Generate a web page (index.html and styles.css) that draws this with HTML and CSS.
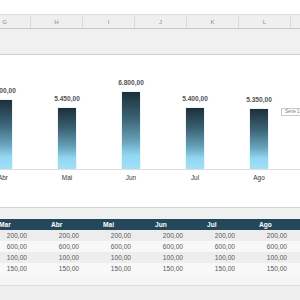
FILE: index.html
```html
<!DOCTYPE html>
<html>
<head>
<meta charset="utf-8">
<link rel="stylesheet" href="styles.css">
</head>
<body>
<div class="topbar"></div>
<div class="colhead">
  <div class="ch">G</div><div class="ch">H</div><div class="ch">I</div><div class="ch">J</div><div class="ch">K</div><div class="ch">L</div><div class="ch"></div>
</div>
<div class="gap1"></div>
<div class="chart">
  <div class="plot">
    <div class="slot"><span class="val">6.100,00</span><div class="bar" style="height:70px"></div></div>
    <div class="slot"><span class="val">5.450,00</span><div class="bar" style="height:62px"></div></div>
    <div class="slot"><span class="val">6.800,00</span><div class="bar" style="height:78px"></div></div>
    <div class="slot"><span class="val">5.400,00</span><div class="bar" style="height:62px"></div></div>
    <div class="slot"><span class="val">5.350,00</span><div class="bar" style="height:61px"></div></div>
  </div>
  <div class="axis"></div>
  <div class="cats">
    <span class="cat">Abr</span><span class="cat">Mai</span><span class="cat">Jun</span><span class="cat">Jul</span><span class="cat">Ago</span>
  </div>
  <div class="legend">Série 1</div>
</div>
<div class="gap2"></div>
<div class="table">
  <div class="row head"><span>Mar</span><span>Abr</span><span>Mai</span><span>Jun</span><span>Jul</span><span>Ago</span></div>
  <div class="row odd"><span>200,00</span><span>200,00</span><span>200,00</span><span>200,00</span><span>200,00</span><span>200,00</span></div>
  <div class="row even"><span>600,00</span><span>600,00</span><span>600,00</span><span>600,00</span><span>600,00</span><span>600,00</span></div>
  <div class="row odd"><span>100,00</span><span>100,00</span><span>100,00</span><span>100,00</span><span>100,00</span><span>100,00</span></div>
  <div class="row even"><span>150,00</span><span>150,00</span><span>150,00</span><span>150,00</span><span>150,00</span><span>150,00</span></div>
</div>
<div class="tail"></div>
</body>
</html>
```
FILE: styles.css
```css
html, body {
  margin: 0;
  padding: 0;
  background: #efefef;
  font-family: "Liberation Sans", Arial, sans-serif;
  overflow: hidden;
  width: 300px;
  height: 300px;
}
.topbar {
  height: 14px;
  background: #ffffff;
  border-bottom: 1px solid #dcdcdc;
}
.colhead {
  height: 13px;
  background: #efefef;
  border-bottom: 1px solid #c9c9c9;
  display: flex;
  margin-left: -21px;
  overflow: hidden;
}
.ch {
  flex: 0 0 52px;
  box-sizing: border-box;
  border-right: 1px solid #dadada;
  font-size: 6px;
  color: #8a8a8a;
  text-align: center;
  line-height: 14px;
}
.gap1 {
  height: 25px;
  background: #f0f0f0;
  border-bottom: 1px solid #cfcfcf;
}
.chart {
  position: relative;
  height: 152px;
  background: #ffffff;
  border-bottom: 1px solid #d2d2d2;
  overflow: hidden;
}
.plot {
  height: 114px;
  display: flex;
  align-items: flex-end;
  margin-left: -29px;
}
.slot {
  flex: 0 0 64px;
  display: flex;
  flex-direction: column;
  align-items: center;
}
.val {
  font-size: 6.6px;
  font-weight: bold;
  color: #555;
  line-height: 8px;
  margin-bottom: 4px;
  white-space: nowrap;
}
.bar {
  width: 20px;
  box-sizing: border-box;
  border: 1px solid #eaf6fb;
  border-bottom: none;
  background: linear-gradient(to bottom, #1c2f3b 0%, #3c6477 35%, #6aa4bd 65%, #92d6f1 82%, #a3e0f7 100%);
}
.axis {
  height: 1px;
  background: #dedede;
}
.cats {
  display: flex;
  margin-left: -29px;
  margin-top: 4px;
}
.cat {
  flex: 0 0 64px;
  text-align: center;
  font-size: 6.4px;
  color: #333;
  line-height: 8px;
}
.legend {
  position: absolute;
  left: 281px;
  top: 53px;
  width: 40px;
  height: 8px;
  box-sizing: border-box;
  border: 1px solid #c8c8c8;
  background: #fff;
  font-size: 4.6px;
  color: #777;
  line-height: 6px;
  padding-left: 3px;
}
.gap2 {
  height: 11px;
  background: #f0f0f0;
}
.table {
  margin-left: -5px;
}
.row {
  height: 11px;
  display: grid;
  grid-template-columns: repeat(6, 52px);
  font-size: 6.6px;
  line-height: 11px;
}
.row span {
  text-align: right;
  padding-right: 20px;
  color: #5a5a5a;
}
.row.head {
  background: #24475b;
}
.row.head span {
  text-align: left;
  padding-left: 4px;
  padding-right: 0;
  color: #ffffff;
  font-weight: bold;
}
.row.odd {
  background: #ededed;
}
.row.even {
  background: #f8f8f8;
}
.tail {
  height: 11px;
  background: #f6f6f6;
  border-bottom: 1px solid #dedede;
}
```
